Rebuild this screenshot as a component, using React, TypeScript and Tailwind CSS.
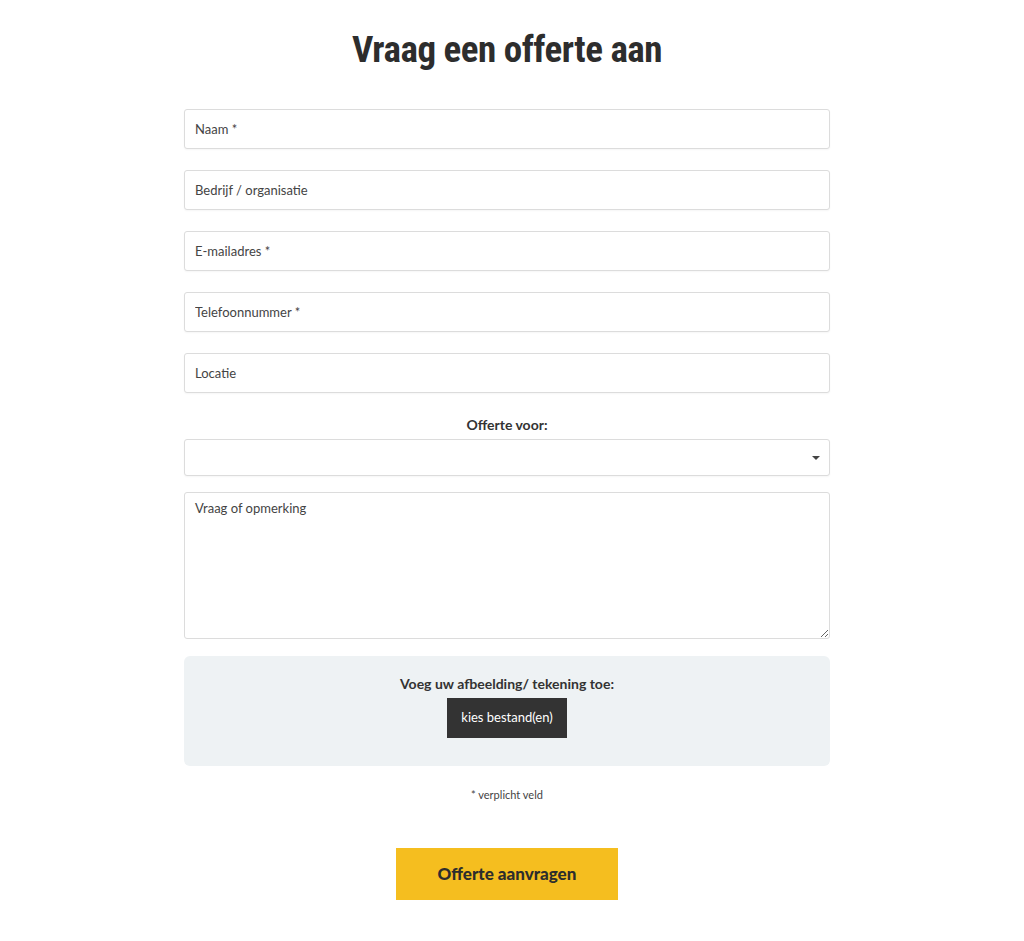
import React from "react";

export default function App() {
  const body = { fontFamily: "Lato, 'Open Sans', sans-serif" };
  const inputCls =
    "w-full h-[40px] border border-[#dcdcdc] rounded-[3px] bg-white px-[10px] text-[13px] text-[#333] placeholder-[#444] outline-none shadow-[0_1px_2px_rgba(0,0,0,0.04)]";
  return (
    <div className="min-h-[941px] bg-white" style={body}>
      <div className="w-[646px] ml-[184px] pt-[28px]">
        <h1
          className="text-center text-[37px] font-bold text-[#2d2d2d] leading-[44px] tracking-[-0.5px]"
          style={{ fontFamily: "'Roboto Condensed', 'Liberation Sans Narrow', 'DejaVu Sans Condensed', Roboto, sans-serif" }}
        >
          Vraag een offerte aan
        </h1>
        <div className="mt-[37px] flex flex-col gap-[21px]">
          <input className={inputCls} placeholder="Naam *" />
          <input className={inputCls} placeholder="Bedrijf / organisatie" />
          <input className={inputCls} placeholder="E-mailadres *" />
          <input className={inputCls} placeholder="Telefoonnummer *" />
          <input className={inputCls} placeholder="Locatie" />
        </div>
        <div className="mt-[22px] text-center text-[14px] font-bold text-[#333] leading-[20px]">Offerte voor:</div>
        <div className="mt-[4px] relative h-[37px] border border-[#dcdcdc] rounded-[3px] bg-white shadow-[0_1px_2px_rgba(0,0,0,0.04)]">
          <div className="absolute right-[9px] top-[16px] w-0 h-0 border-l-[4px] border-r-[4px] border-t-[4px] border-l-transparent border-r-transparent border-t-[#444]" />
        </div>
        <textarea
          className="mt-[16px] block w-full h-[147px] border border-[#dcdcdc] rounded-[3px] bg-white px-[10px] py-[6px] text-[13px] text-[#333] placeholder-[#444] outline-none resize-y"
          placeholder="Vraag of opmerking"
        />
        <div className="mt-[17px] h-[110px] rounded-[6px] bg-[#eef2f4] flex flex-col items-center pt-[18px]">
          <div className="text-[14px] font-bold text-[#333] leading-[20px]">Voeg uw afbeelding/ tekening toe:</div>
          <div className="mt-[4px] w-[120px] h-[40px] bg-[#333333] text-white text-[13px] flex items-center justify-center">
            kies bestand(en)
          </div>
        </div>
        <div className="mt-[22px] text-center text-[11px] text-[#444] leading-[14px]">* verplicht veld</div>
        <div className="mt-[46px] flex justify-center">
          <button className="w-[222px] h-[52px] bg-[#f5be1f] text-[#2d2d2d] text-[17px] font-black">
            Offerte aanvragen
          </button>
        </div>
      </div>
    </div>
  );
}
